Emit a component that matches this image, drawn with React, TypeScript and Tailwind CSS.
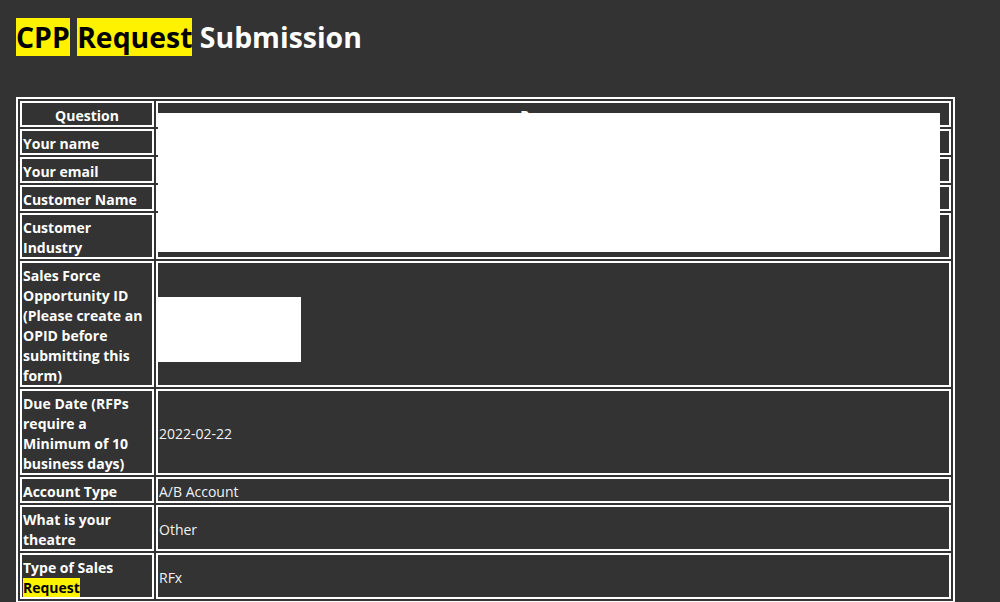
const rows: { q: string; a?: string; hl?: boolean }[] = [
  { q: "Your name" },
  { q: "Your email" },
  { q: "Customer Name" },
  { q: "Customer Industry" },
  { q: "Sales Force Opportunity ID (Please create an OPID before submitting this form)" },
  { q: "Due Date (RFPs require a Minimum of 10 business days)", a: "2022-02-22" },
  { q: "Account Type", a: "A/B Account" },
  { q: "What is your theatre", a: "Other" },
  { q: "Type of Sales", a: "RFx", hl: true },
];

export default function App() {
  return (
    <div className="relative min-h-[602px] bg-[#333333] px-4 pt-[18px] text-white font-['Open_Sans','Noto_Sans',sans-serif]">
      <h1 className="text-[28.4px] font-bold leading-[39px] mb-10">
        <span className="bg-[#fff200] text-black">CPP</span>{" "}
        <span className="bg-[#fff200] text-black">Request</span> Submission
      </h1>

      <table className="w-[939px] border-separate border-spacing-[2px] border-2 border-white text-[14px] leading-5">
        <thead>
          <tr>
            <th className="w-[134px] border-2 border-white p-px font-bold">
              <span className="relative top-[2px]">Question</span>
            </th>
            <th className="border-2 border-white p-px font-bold">
              <span className="relative top-[2px]">Response</span>
            </th>
          </tr>
        </thead>
        <tbody>
          {rows.map((r) => (
            <tr key={r.q}>
              <td className="border-2 border-white p-px font-bold align-middle">
                <span className="relative top-[2px]">
                  {r.q}
                  {r.hl && (
                    <>
                      {" "}
                      <span className="bg-[#fff200] text-black">Request</span>
                    </>
                  )}
                </span>
              </td>
              <td className="border-2 border-white p-px align-middle text-[#f2f2f2]">
                <span className="relative top-[2px]">{r.a}</span>
              </td>
            </tr>
          ))}
        </tbody>
      </table>

      {/* redacted blocks */}
      <div className="absolute left-[158px] top-[113px] h-[139px] w-[782px] bg-white" />
      <div className="absolute left-[158px] top-[297px] h-[65px] w-[143px] bg-white" />
    </div>
  );
}
